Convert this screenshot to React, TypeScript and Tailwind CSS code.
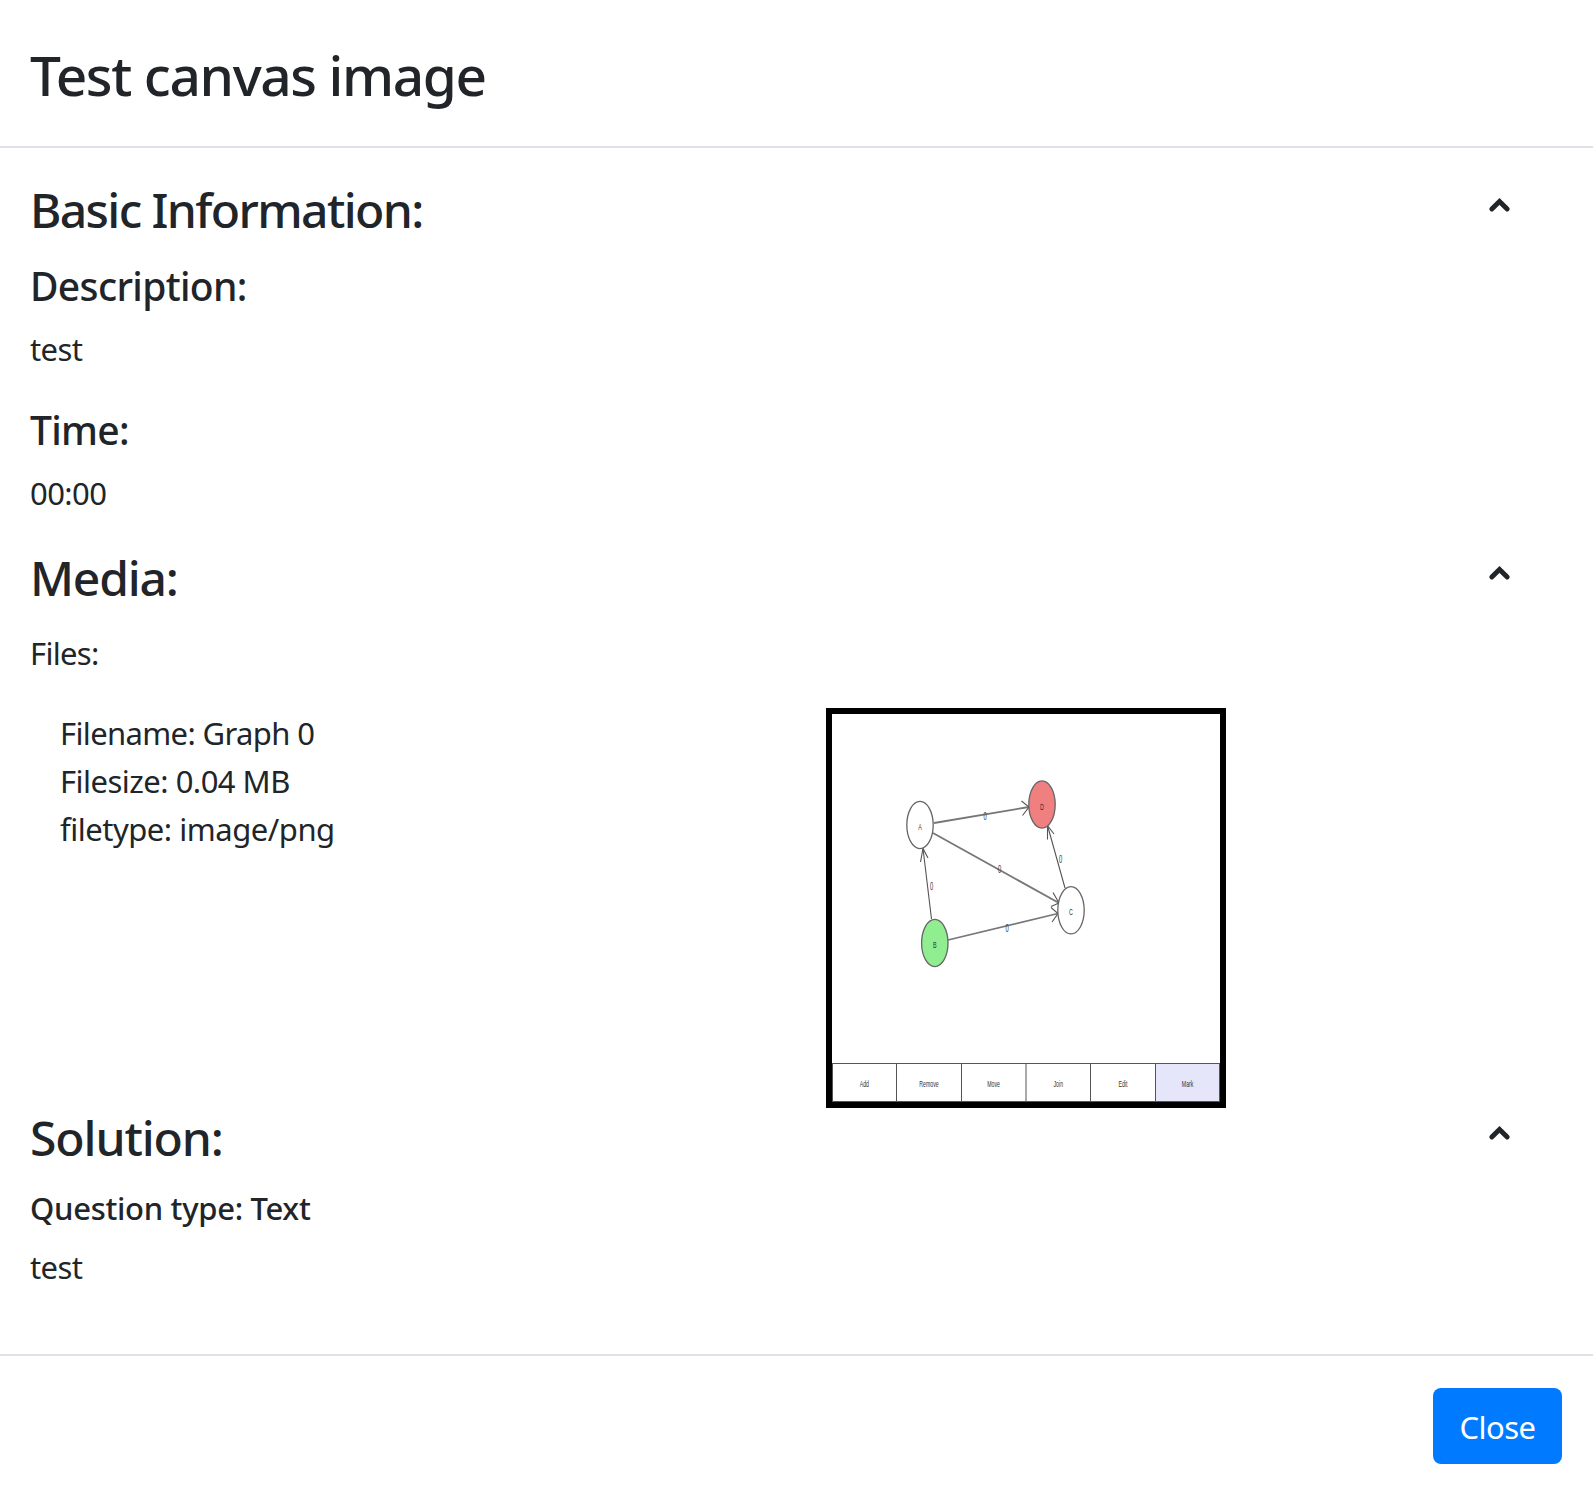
import React from "react";

function Chevron() {
  return (
    <svg className="mr-[47px] mt-[7px] h-8 w-8 shrink-0" viewBox="0 0 32 32" fill="none" stroke="#212529" strokeWidth="4.9" strokeLinecap="round">
      <path d="M7.8 20 L15.5 12.400 L23.2 20" />
    </svg>
  );
}

function SectionHeader({ title, spacing }: { title: string; spacing: string }) {
  return (
    <div className="flex h-[58px] items-start justify-between">
      <h2 className={`text-[48px] leading-[56px] font-medium whitespace-nowrap ${spacing}`}>{title}</h2>
      <Chevron />
    </div>
  );
}

function GraphPreview() {
  const nodes = [
    { x: 88, y: 111, t: "A", fill: "#fff" },
    { x: 102.8, y: 229, t: "B", fill: "#90ee90" },
    { x: 239, y: 196.3, t: "C", fill: "#fff" },
    { x: 210, y: 90.5, t: "D", fill: "#f08080" },
  ];
  const labels = [[153, 106], [167.5, 158.5], [99.5, 175.5], [228.5, 148.5], [175, 217.5]];
  const tools = ["Add", "Remove", "Move", "Join", "Edit", "Mark"];
  return (
    <svg viewBox="0 0 388 388" className="block h-[388px] w-[388px] tracking-normal" fontFamily="Liberation Sans, sans-serif" textAnchor="middle" fill="#333">
      <g fill="none" stroke="#555" strokeWidth="1.1">
        <path stroke="#777" strokeWidth="1.8" d="M102 109 L197 93 M101 119 L227 189 M116 226 L226 199.5" />
        <path d="M99.5 205 L91 134.5 M233 174 L215.5 111.5" />
        <path d="M189.5 87 L197 93 L190.5 101.5 M221 178.5 L227 189 L219 192.5 M219 193.5 L226 199.5 L220 208 M88.5 148 L91 134.5 L96 144 M215.5 125.5 L215.5 111.5 L222 120" />
      </g>
      {nodes.map((n) => (
        <g key={n.t}>
          <ellipse cx={n.x} cy={n.y} rx="13.2" ry="23.6" fill={n.fill} stroke="#666" strokeWidth="1.3" />
          <text transform={`translate(${n.x} ${n.y + 5}) scale(.6 1)`} fontSize="9">{n.t}</text>
        </g>
      ))}
      {labels.map(([x, y]) => (
        <text key={x} transform={`translate(${x} ${y}) scale(.58 1)`} fontSize="10">0</text>
      ))}
      <rect x="323.3" y="349" width="64.7" height="38.5" fill="#e6e6fa" />
      <path d="M0 349.5 H388 M0 387.5 H388 M.5 349 V388 M64.5 349 V388 M129.5 349 V388 M194 349 V388 M258.5 349 V388 M323.5 349 V388 M387.5 349 V388" fill="none" stroke="#555" />
      {tools.map((t, i) => (
        <text key={t} transform={`translate(${32.3 + i * 64.66} 373) scale(.58 1)`} fontSize="9">{t}</text>
      ))}
    </svg>
  );
}

export default function App() {
  return (
    <div className="flex h-[1493px] w-[1593px] flex-col overflow-hidden bg-white font-['Noto_Sans','Open_Sans',sans-serif] text-[31px] leading-[48px] tracking-[-0.58px] text-[#212529]">
      <header className="flex h-[148px] shrink-0 items-start border-b-2 border-[#dee2e6] px-[30px] pt-[33px]">
        <h1 className="text-[55px] leading-[84px] font-medium tracking-[-1.38px] whitespace-nowrap">Test canvas image</h1>
      </header>
      <main className="h-[1206px] shrink-0 px-[30px] pt-[34px]">
        <SectionHeader title="Basic Information:" spacing="tracking-[-1.62px]" />
        <h3 className="mt-[22px] text-[39px] font-medium tracking-[-0.65px]">Description:</h3>
        <p className="mt-[15px]">test</p>
        <h3 className="mt-[33px] text-[39px] font-medium tracking-[-0.7px]">Time:</h3>
        <p className="mt-[15px] mb-[33px]">00:00</p>
        <SectionHeader title="Media:" spacing="tracking-[-1.2px]" />
        <p className="mt-[21px] tracking-[-0.7px]">Files:</p>
        <div className="mt-[31px] flex h-[400px]">
          <div className="w-[796px] pt-[1px] pl-[30px]">
            <p className="tracking-[-0.64px]">Filename: Graph 0</p>
            <p className="tracking-[-0.52px]">Filesize: 0.04 MB</p>
            <p className="tracking-[-0.48px]">filetype: image/png</p>
          </div>
          <div className="h-[400px] w-[400px] border-[6px] border-black"><GraphPreview /></div>
        </div>
        <div className="pt-[2px]">
          <SectionHeader title="Solution:" spacing="tracking-[-1.1px]" />
        </div>
        <h4 className="mt-4 font-medium tracking-[-0.3px]">Question type: Text</h4>
        <p className="mt-[11px]">test</p>
      </main>
      <footer className="flex h-[139px] justify-end border-t-2 border-[#dee2e6] pt-8 pr-[31px]">
        <button className="h-[76px] w-[129px] rounded-lg bg-[#007bff] pt-[2px] text-white">Close</button>
      </footer>
    </div>
  );
}
